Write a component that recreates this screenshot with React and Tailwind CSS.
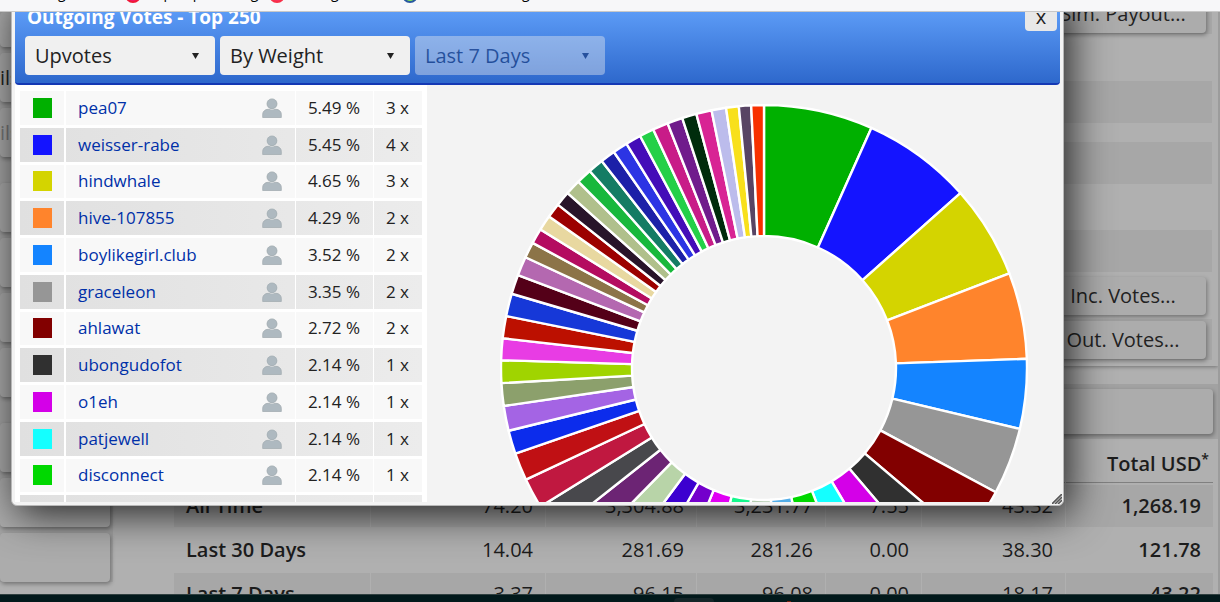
import React from 'react';
import clsx from 'clsx';

const voters = [
  { name: 'pea07', weight: '5.49 %', count: '3 x', color: '#00b000' },
  { name: 'weisser-rabe', weight: '5.45 %', count: '4 x', color: '#1414ff' },
  { name: 'hindwhale', weight: '4.65 %', count: '3 x', color: '#d4d400' },
  { name: 'hive-107855', weight: '4.29 %', count: '2 x', color: '#ff842c' },
  { name: 'boylikegirl.club', weight: '3.52 %', count: '2 x', color: '#1484ff' },
  { name: 'graceleon', weight: '3.35 %', count: '2 x', color: '#969696' },
  { name: 'ahlawat', weight: '2.72 %', count: '2 x', color: '#820000' },
  { name: 'ubongudofot', weight: '2.14 %', count: '1 x', color: '#303030' },
  { name: 'o1eh', weight: '2.14 %', count: '1 x', color: '#d400e8' },
  { name: 'patjewell', weight: '2.14 %', count: '1 x', color: '#14ffff' },
  { name: 'disconnect', weight: '2.14 %', count: '1 x', color: '#00d800' },
  { name: '', weight: '', count: '', color: '' },
];

// [end angle in degrees, colour], clockwise from the top
const slices = [
  [24.1, '#00b000'],
  [48.3, '#1414ff'],
  [68.9, '#d4d400'],
  [88, '#ff842c'],
  [103.4, '#1484ff'],
  [118.2, '#969696'],
  [130.3, '#820000'],
  [139.7, '#303030'],
  [149.2, '#d400e8'],
  [158.7, '#14ffff'],
  [168.1, '#00d800'],
  [177, '#54aee8'],
  [185.7, '#b4ccb0'],
  [194.2, '#14f88c'],
  [202.4, '#e000f4'],
  [209.7, '#7400cc'],
  [216.7, '#3c00d0'],
  [224.4, '#b8d4a8'],
  [231.7, '#6c2474'],
  [238.2, '#48484c'],
  [244.9, '#c01840'],
  [251, '#c01014'],
  [256.2, '#0c2cec'],
  [261.7, '#a464e4'],
  [266.7, '#8ca06c'],
  [271.7, '#a0d400'],
  [276.5, '#e83ce4'],
  [281.4, '#bc1000'],
  [286.4, '#1638d8'],
  [290.7, '#540018'],
  [294.9, '#b468b0'],
  [298.4, '#8c7448'],
  [301.8, '#b40c60'],
  [305.2, '#e8d8a0'],
  [308.4, '#9c0000'],
  [311.7, '#28142a'],
  [315.1, '#b0c08c'],
  [318.5, '#18b83c'],
  [321.9, '#147c64'],
  [325.2, '#1c20a8'],
  [328.5, '#2c34e4'],
  [331.9, '#440cb8'],
  [335.1, '#24d048'],
  [338.5, '#c81c88'],
  [341.9, '#701c8c'],
  [345.1, '#002c0c'],
  [348.5, '#d82494'],
  [351.7, '#bcbcec'],
  [354.5, '#f8e01c'],
  [357.2, '#584464'],
  [360, '#f83000'],
];

const rewards = [
  { label: 'All Time', values: ['74.20', '3,304.88', '3,231.77', '7.55', '43.32'], total: '1,268.19' },
  { label: 'Last 30 Days', values: ['14.04', '281.69', '281.26', '0.00', '38.30'], total: '121.78' },
  { label: 'Last 7 Days', values: ['3.37', '96.15', '96.08', '0.00', '18.17'], total: '43.22' },
];

const point = (angle, radius) => {
  const rad = (angle * Math.PI) / 180;
  return `${(264 + radius * Math.sin(rad)).toFixed(2)} ${(264 - radius * Math.cos(rad)).toFixed(2)}`;
};

const slicePath = (start, end) =>
  `M${point(start, 263)}A263 263 0 0 1 ${point(end, 263)}L${point(end, 132)}A132 132 0 0 0 ${point(start, 132)}Z`;

const DonutChart = () => (
  <svg className="h-[528px] w-[528px] shrink-0" viewBox="0 0 528 528" role="img" aria-label="Votes by weight">
    {slices.map(([end, color], idx) => (
      <path
        key={idx}
        d={slicePath(idx === 0 ? 0 : slices[idx - 1][0], end)}
        fill={color}
        stroke="#fff"
        strokeWidth="2.4"
        strokeLinejoin="round"
      />
    ))}
  </svg>
);

const PersonIcon = () => (
  <svg className="h-5 w-5" viewBox="0 0 20 20" aria-hidden="true">
    <path
      d="M.7 19.5v-3.2c0-3 2.6-5 5.4-5h7.8c2.8 0 5.4 2 5.4 5v3.2z"
      fill="#aeb9c0"
      stroke="#a4adb2"
      strokeWidth="0.8"
    />
    <circle cx="10" cy="6" r="5.3" fill="#aeb9c0" stroke="#f0f0f0" strokeWidth="0.8" />
    <circle cx="10" cy="5.8" r="4.9" fill="#aeb9c0" stroke="#a4adb2" strokeWidth="0.7" />
  </svg>
);

const FilterSelect = ({ label, value, disabled }) => (
  <div className={clsx('relative w-[190px]', disabled && 'opacity-40')}>
    <select
      aria-label={label}
      disabled={disabled}
      defaultValue={value}
      className="h-[39px] w-full appearance-none rounded bg-[#f0f0f0] px-[10px] text-xl text-[#222] disabled:text-[#001040] disabled:opacity-100"
    >
      <option>{value}</option>
    </select>
    <svg className="pointer-events-none absolute top-4 right-4 h-2 w-[7px]" viewBox="0 0 7 8" aria-hidden="true">
      <path d="M0 1h7L3.5 7z" fill={disabled ? '#001040' : '#222'} />
    </svg>
  </div>
);

const PageButton = ({ children, className }) => (
  <button
    type="button"
    className={clsx('rounded bg-[#acacac] text-xl text-[#222] shadow-[1px_2px_4px_rgba(0,0,0,0.35)]', className)}
  >
    {children}
  </button>
);

const SideMenu = () => (
  <nav className="flex w-[113px] shrink-0 flex-col gap-[26px] bg-[#a6a6a6] pr-[3px]">
    <div className="flex flex-col gap-[6px]">
      <PageButton className="h-[35px]" />
      <PageButton className="h-[49px] text-left">ils</PageButton>
      <PageButton className="h-[49px] text-left text-[#777]">ils</PageButton>
    </div>
    <div className="flex flex-col gap-[6px]">
      <PageButton className="h-[49px]" />
      <PageButton className="h-[49px]" />
      <PageButton className="h-[49px]" />
      <PageButton className="h-[49px]" />
    </div>
    <div className="flex flex-col gap-[6px]">
      <PageButton className="h-[49px]" />
      <PageButton className="h-[49px]" />
      <PageButton className="h-[49px]" />
    </div>
  </nav>
);

const AccountPanel = () => (
  <section className="-mt-[19px] bg-[#b0b0b0] pr-[6px] pb-[6px] shadow-[0_1px_4px_rgba(0,0,0,0.35)]">
    <div className="flex h-[41px] items-center justify-end bg-[#a7a7a7] pr-[6px]">
      <PageButton className="h-[38px] w-[166px]">Sim. Payout...</PageButton>
    </div>
    <div className="h-[47px]" />
    <div className="h-[42px] bg-[#a7a7a7]" />
    <div className="h-[19px]" />
    <div className="h-[42px] bg-[#a7a7a7]" />
    <div className="h-[46px]" />
    <div className="h-[42px] bg-[#a7a7a7]" />
    <div className="flex h-[47px] items-center justify-end pr-[6px]">
      <PageButton className="h-[38px] w-[166px]">Inc. Votes...</PageButton>
    </div>
    <div className="flex h-[41px] items-center justify-end bg-[#a7a7a7] pr-[6px]">
      <PageButton className="h-[38px] w-[166px]">Out. Votes...</PageButton>
    </div>
  </section>
);

const RewardsPanel = () => (
  <section className="mt-[18px] bg-[#b0b0b0]">
    <div className="flex h-[55px] items-center bg-[#a2a2a2] px-[5px]">
      <PageButton className="h-[45px] flex-1" />
    </div>
    <div className="pr-1 pl-[3px]">
      <table className="w-full table-fixed border-separate border-spacing-x-px border-spacing-y-[2px] text-right text-xl">
        <colgroup>
          <col />
          <col className="w-[174px]" />
          <col className="w-[150px]" />
          <col className="w-[128px]" />
          <col className="w-[95px]" />
          <col className="w-[143px]" />
          <col className="w-[147px]" />
        </colgroup>
        <thead>
          <tr className="h-[42px]">
            <td colSpan={6} className="border-b border-[#808080]" />
            <th scope="col" className="border-b border-[#808080] pt-1 pr-1 font-semibold whitespace-nowrap">
              Total USD<sup className="text-sm">*</sup>
            </th>
          </tr>
        </thead>
        <tbody>
          {rewards.map((row) => (
            <tr key={row.label} className="h-[42px] odd:bg-[#a7a7a7]">
              <th scope="row" className="px-3 text-left font-semibold">{row.label}</th>
              {row.values.map((value, idx) => (
                <td key={idx} className="px-3">{value}</td>
              ))}
              <td className="px-3 font-semibold">{row.total}</td>
            </tr>
          ))}
        </tbody>
      </table>
    </div>
  </section>
);

const VotersTable = () => (
  <div className="w-[412px] shrink-0 bg-white px-1 pt-[3px]">
    <table className="h-[444px] w-full table-fixed border-separate border-spacing-x-px border-spacing-y-[3px] text-[17px] leading-6 text-[#222]">
      <colgroup>
        <col className="w-[45px]" />
        <col />
        <col className="w-[77px]" />
        <col className="w-[48px]" />
      </colgroup>
      <tbody>
        {voters.map((voter, idx) => (
          <tr key={idx} className="h-[33px] bg-[#f8f8f8] even:bg-linear-to-r even:from-[#e0e0e0] even:to-[#ececec]">
            <td className="border-r border-white p-0">
              {voter.color && <div className="ml-[13px] h-5 w-[19px]" style={{ backgroundColor: voter.color }} />}
            </td>
            <td className="py-0 pr-[13px] pl-3">
              {voter.name && (
                <div className="flex items-center justify-between">
                  <a href={`#${voter.name}`} className="text-[#0030a8]">{voter.name}</a>
                  <PersonIcon />
                </div>
              )}
            </td>
            <td className="py-0 pr-[13px] text-right whitespace-nowrap">{voter.weight}</td>
            <td className="py-0 pr-[13px] text-right whitespace-nowrap">{voter.count}</td>
          </tr>
        ))}
      </tbody>
    </table>
  </div>
);

const VotesDialog = () => (
  <div
    role="dialog"
    aria-labelledby="votes-title"
    className="absolute -top-5 right-[154px] bottom-[88px] left-[11px] flex flex-col overflow-hidden rounded-[6px] border border-[#b8b8b8] bg-[#f3f3f3] p-[3px] shadow-[6px_8px_40px_rgba(0,0,0,0.8)]"
  >
    <header className="rounded-[4px] border-b-2 border-[#1438b4] bg-linear-to-b from-[#66a6ff] to-[#2e68cc] px-[10px] pt-[7px] pb-2">
      <div className="flex items-start justify-between">
        <h2 id="votes-title" className="pl-[2px] text-[19px] leading-7 font-bold text-white">Outgoing Votes - Top 250</h2>
        <button type="button" aria-label="Close" className="-mr-[7px] h-7 w-8 rounded bg-[#e8e8e8] text-xl leading-7 text-[#222]">
          x
        </button>
      </div>
      <div className="mt-[5px] flex gap-[5px]">
        <FilterSelect label="Vote type" value="Upvotes" />
        <FilterSelect label="Order" value="By Weight" />
        <FilterSelect label="Period" value="Last 7 Days" disabled />
      </div>
    </header>
    <div className="flex min-h-0 flex-1 overflow-hidden">
      <VotersTable />
      <div className="flex flex-1 justify-center pt-[19px] pl-10">
        <DonutChart />
      </div>
    </div>
    <svg className="absolute right-px bottom-px h-[10px] w-[10px]" viewBox="0 0 10 10" aria-hidden="true">
      <path d="M0 10L10 0M3 10L10 3M6 10L10 6" stroke="#555" strokeWidth="1.6" />
    </svg>
  </div>
);

const BookmarksBar = () => (
  <div className="flex h-3 items-end overflow-hidden border-b border-[#c8c8c8] bg-[#f7f7f9] pb-2 text-sm leading-5 text-black">
    <span className="w-[125px] pl-[58px]">g</span>
    <span className="h-4 w-4 rounded-full border-2 border-[#f01838] bg-[#f0186c]" />
    <span className="w-[128px] pl-1">https://peakd.org/</span>
    <span className="h-4 w-4 rounded-full border-2 border-[#f83048] bg-[#f83060]" />
    <span className="w-[117px] pl-1">Trading</span>
    <span className="h-4 w-4 rounded-full border-2 border-[#2858a0] bg-[#88e858]" />
    <span className="pl-[104px]">g</span>
  </div>
);

const Taskbar = () => (
  <div className="flex h-2 items-end overflow-hidden border-t border-[#304040] bg-[#02191b]">
    <div className="h-1 flex-1" />
    <div className="h-1 w-10 rounded-t bg-[#142528]" />
    <div className="flex h-1 w-[506px] items-end">
      <div className="ml-[73px] h-px w-1 bg-[#7a2010]" />
    </div>
  </div>
);

export default function App() {
  return (
    <div className="flex h-screen flex-col overflow-hidden bg-[#b0b0b0] font-['Open_Sans',sans-serif] text-[#1c1c1c]">
      <BookmarksBar />
      <main className="relative flex min-h-0 flex-1 items-start overflow-hidden border-r-2 border-[#9c9c9c]">
        <SideMenu />
        <div className="ml-[57px] min-w-0 flex-1">
          <AccountPanel />
          <RewardsPanel />
        </div>
        <VotesDialog />
      </main>
      <Taskbar />
    </div>
  );
}
